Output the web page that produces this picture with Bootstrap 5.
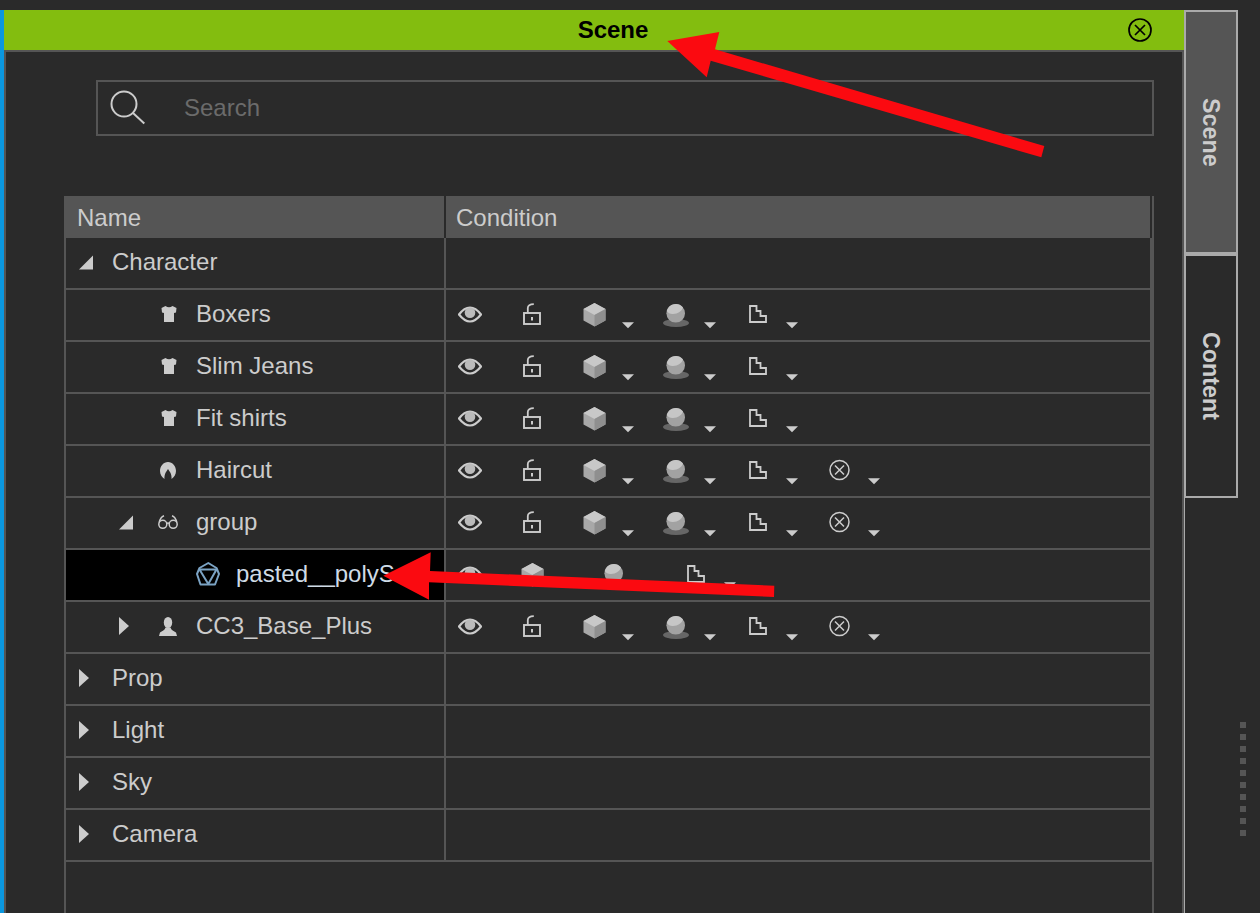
<!DOCTYPE html>
<html lang="en">
<head>
<meta charset="utf-8">
<title>Scene</title>
<link rel="stylesheet" href="https://cdn.jsdelivr.net/npm/bootstrap@5.3.0/dist/css/bootstrap.min.css">
<style>
body{background:#2a2a2a;font-family:"Liberation Sans",Arial,sans-serif;font-size:24px;color:#ccc}
.stage{padding-top:10px}
.strip{width:4px;background:#0b97df;flex:none}
.panel{width:1180px;flex:none}
.ptitle{display:grid;height:40px;background:#83bd0f;color:#000;flex:none}
.ptitle>*{grid-area:1/1}
.ptitle-text{font-weight:700;line-height:40px;text-align:center;padding-left:38px}
.pclose{width:24px;height:24px;justify-self:end;align-self:center;margin-right:32px}
.pbody{border:2px solid #555;border-bottom:0;padding:28px 28px 0 58px;min-height:0}
.finder{height:56px;margin-left:32px;border:2px solid #555;padding-left:12px;flex:none}
.finder svg{width:36px;height:52px;flex:none}
.finder .form-control{background:transparent;border:0;border-radius:0;box-shadow:none;color:#ccc;font-size:24px;padding:0;margin-left:38px;height:52px}
.finder .form-control::placeholder{color:#6b6b6b;opacity:1}
.tree{margin-top:60px;border-left:2px solid #555;border-right:2px solid #555}
.thead{height:42px;margin-left:-2px;background:#555;line-height:43px;flex:none}
.thead-n{width:382px;padding-left:13px;border-right:2px solid #2a2a2a}
.thead-c{padding-left:10px;flex:1;border-right:2px solid #2a2a2a}
.trow{height:52px;border-bottom:2px solid #555;border-right:2px solid #555;flex:none}
.cname{width:380px;height:50px;border-right:2px solid #555;line-height:48px;white-space:nowrap;flex:none}
.cname svg,.ccond svg{height:50px;flex:none;display:block}
.ccond{flex:1;padding-left:12px}
.picked{background:#000;color:#cfdbe6}
.t-open{width:14px;margin-left:13px}
.t-shut{width:10px;margin-left:13px}
.l-open{margin-left:19px}
.l-shut{margin-left:23px}
.t2{margin-left:53px}
.i-shirt{width:16px;margin-left:95px}
.i-hair{width:16px;margin-left:94px}
.i-glass{width:20px;margin-left:25px}
.i-man{width:18px;margin-left:30px}
.i-poly{width:24px;margin-left:130px}
.l-leaf{margin-left:19px}
.l-hair{margin-left:20px}
.l-glass{margin-left:18px}
.l-poly{margin-left:16px}
.e-eye{width:24px}
.e-lock{width:18px;margin-left:41px}
.e-cube{width:23px;margin-left:42px}
.e-ball{width:26px;margin-left:29px}
.e-step{width:18px;margin-left:33px}
.e-x{width:21px;margin-left:31px}
.e-drop{width:12px}
.d-cube{margin-left:16px}
.d-ball{margin-left:15px}
.d-step{margin-left:19px}
.d-x{margin-left:18px}
.s-cube{width:23px;margin-left:39px}
.s-ball{width:26px;margin-left:57px}
.s-step{width:18px;margin-left:60px}
.tabs{width:54px;flex:none;border-left:1px solid #aaa}
.vtab{width:54px;margin-left:-1px;border:2px solid #aaa;writing-mode:vertical-rl;font-weight:700;font-size:23.3px;flex:none}
.vtab-on{height:244px;background:#555}
.vtab-off{height:244px;border-top:2px solid #aaa;background:#2a2a2a}
.grip{padding:712px 0 0 2px;gap:6px}
.grip span{width:6px;height:6px;background:#555}
.marks{left:0;top:0;width:1260px;height:913px;pointer-events:none}
</style>
</head>
<body class="vh-100 overflow-hidden position-relative">
<svg width="0" height="0" class="position-absolute">
  <defs>
    <symbol id="eye" viewBox="0 0 24 50"><path d="M1 24.500C5 19.200 8 17.500 12 17.500s7 1.700 11 7c-4 5-7 7-11 7s-7-2-11-7z" fill="none" stroke="#ccc" stroke-width="2.200"/><circle cx="12" cy="22.800" r="5.300" fill="#bbb"/></symbol>
    <symbol id="lock" viewBox="0 0 18 50"><rect x="1" y="23" width="16" height="11" fill="none" stroke="#ccc" stroke-width="1.900"/><path d="M4.800 23v-5c0-2.500 2-3.800 6-3.800" fill="none" stroke="#ccc" stroke-width="1.800"/><rect x="8" y="27" width="2" height="3.500" fill="#ccc"/></symbol>
    <symbol id="cube" viewBox="0 0 23 50"><path d="M11.500 13L22.500 19V30.500L11.500 36.500L.5 30.500V19z" fill="#a8a8a8"/><path d="M11.500 13L22.500 19L11.500 25L.5 19z" fill="#c8c8c8"/><path d="M22.500 19L11.500 25V36.500L22.500 30.500z" fill="#8f8f8f"/></symbol>
    <symbol id="ball" viewBox="0 0 26 50"><ellipse cx="13" cy="33" rx="13" ry="4" fill="#666"/><circle cx="12.700" cy="23.300" r="9.300" fill="#a2a2a2"/><path d="M3.800 21A9.300 9.300 0 0 1 20 17.600C19 21 15 24 10 24C7.500 24.200 5 23 3.800 21z" fill="#c6c6c6"/></symbol>
    <symbol id="step" viewBox="0 0 18 50"><path d="M1 16H7.500V21H11.500V26H17V32H1z" fill="none" stroke="#ccc" stroke-width="1.800"/></symbol>
    <symbol id="xo" viewBox="0 0 21 50"><circle cx="10.500" cy="24" r="9.500" fill="none" stroke="#ccc" stroke-width="1.500"/><path d="M6 19.500l9 9M15 19.500l-9 9" stroke="#ccc" stroke-width="1.500"/></symbol>
    <symbol id="drop" viewBox="0 0 12 50"><path d="M0 32.300H12L6 38.300z" fill="#ccc"/></symbol>
    <symbol id="topen" viewBox="0 0 14 50"><path d="M0 31.500L14 17.500V31.500z" fill="#ccc"/></symbol>
    <symbol id="tshut" viewBox="0 0 10 50"><path d="M0 15L10 24L0 33z" fill="#ccc"/></symbol>
    <symbol id="shirt" viewBox="0 0 16 50"><path d="M4.500 16L.5 18L1 22.500L3 23V32H13V23L15 22.500L15.500 18L11.500 16Q8 18.500 4.500 16z" fill="#ccc"/></symbol>
    <symbol id="hair" viewBox="0 0 16 50"><path d="M8 16C3.500 16 0 20 0 25c0 3.500 2 6.500 4.500 8-.3-2 .2-4.500 1.200-6.500.7-1.300 1.700-2.500 2.300-3.500.6 1 1.600 2.200 2.300 3.500 1 2 1.500 4.500 1.200 6.500 2.500-1.500 4.500-4.500 4.500-8 0-5-3.500-9-8-9z" fill="#ccc"/></symbol>
    <symbol id="glass" viewBox="0 0 20 50"><g fill="none" stroke="#ccc" stroke-width="1.500"><circle cx="4.800" cy="26.300" r="4"/><circle cx="15.200" cy="26.300" r="4"/><path d="M8.800 25.500Q10 24.500 11.200 25.500M1.200 24.500Q2.500 19 6 17.800M18.800 24.500Q17.500 19 14 17.800"/></g></symbol>
    <symbol id="man" viewBox="0 0 18 50"><ellipse cx="9" cy="20.500" rx="4.200" ry="5.500" fill="#ccc"/><path d="M0 34L1 30.500C3 29 6 28 6.500 25.500H11.500C12 28 15 29 17 30.500L18 34z" fill="#ccc"/></symbol>
    <symbol id="poly" viewBox="0 0 24 50"><g fill="none" stroke="#7ba3c4" stroke-width="2" stroke-linejoin="round"><path d="M12.300 13L20.500 18L23 24L19 34.500H4.500L1 24L3.500 18z"/><path d="M3.500 19.500H20.500L12.300 34z"/></g></symbol>
  </defs>
</svg>

<div class="stage d-flex h-100">
  <div class="strip"></div>
  <div class="panel d-flex flex-column">
    <div class="ptitle">
      <div class="ptitle-text">Scene</div>
      <svg class="pclose" viewBox="0 0 24 24"><circle cx="12" cy="12" r="11" fill="none" stroke="#000" stroke-width="1.700"/><path d="M7 7l10 10M17 7L7 17" stroke="#000" stroke-width="1.700"/></svg>
    </div>
    <div class="pbody flex-grow-1 d-flex flex-column">
      <div class="finder d-flex align-items-center">
        <svg viewBox="0 0 36 52"><circle cx="14" cy="22" r="12.500" fill="none" stroke="#ccc" stroke-width="2"/><path d="M23 31L34.300 41.500" stroke="#ccc" stroke-width="2"/></svg>
        <input class="form-control" type="text" placeholder="Search">
      </div>
      <div class="tree flex-grow-1">
        <div class="thead d-flex">
          <div class="thead-n">Name</div>
          <div class="thead-c">Condition</div>
        </div>

        <div class="trow d-flex">
          <div class="cname d-flex"><svg class="t-open"><use href="#topen"/></svg><span class="l-open">Character</span></div>
          <div class="ccond d-flex"></div>
        </div>

        <div class="trow d-flex">
          <div class="cname d-flex"><svg class="i-shirt"><use href="#shirt"/></svg><span class="l-leaf">Boxers</span></div>
          <div class="ccond d-flex">
            <svg class="e-eye"><use href="#eye"/></svg><svg class="e-lock"><use href="#lock"/></svg><svg class="e-cube"><use href="#cube"/></svg><svg class="e-drop d-cube"><use href="#drop"/></svg><svg class="e-ball"><use href="#ball"/></svg><svg class="e-drop d-ball"><use href="#drop"/></svg><svg class="e-step"><use href="#step"/></svg><svg class="e-drop d-step"><use href="#drop"/></svg>
          </div>
        </div>

        <div class="trow d-flex">
          <div class="cname d-flex"><svg class="i-shirt"><use href="#shirt"/></svg><span class="l-leaf">Slim Jeans</span></div>
          <div class="ccond d-flex">
            <svg class="e-eye"><use href="#eye"/></svg><svg class="e-lock"><use href="#lock"/></svg><svg class="e-cube"><use href="#cube"/></svg><svg class="e-drop d-cube"><use href="#drop"/></svg><svg class="e-ball"><use href="#ball"/></svg><svg class="e-drop d-ball"><use href="#drop"/></svg><svg class="e-step"><use href="#step"/></svg><svg class="e-drop d-step"><use href="#drop"/></svg>
          </div>
        </div>

        <div class="trow d-flex">
          <div class="cname d-flex"><svg class="i-shirt"><use href="#shirt"/></svg><span class="l-leaf">Fit shirts</span></div>
          <div class="ccond d-flex">
            <svg class="e-eye"><use href="#eye"/></svg><svg class="e-lock"><use href="#lock"/></svg><svg class="e-cube"><use href="#cube"/></svg><svg class="e-drop d-cube"><use href="#drop"/></svg><svg class="e-ball"><use href="#ball"/></svg><svg class="e-drop d-ball"><use href="#drop"/></svg><svg class="e-step"><use href="#step"/></svg><svg class="e-drop d-step"><use href="#drop"/></svg>
          </div>
        </div>

        <div class="trow d-flex">
          <div class="cname d-flex"><svg class="i-hair"><use href="#hair"/></svg><span class="l-hair">Haircut</span></div>
          <div class="ccond d-flex">
            <svg class="e-eye"><use href="#eye"/></svg><svg class="e-lock"><use href="#lock"/></svg><svg class="e-cube"><use href="#cube"/></svg><svg class="e-drop d-cube"><use href="#drop"/></svg><svg class="e-ball"><use href="#ball"/></svg><svg class="e-drop d-ball"><use href="#drop"/></svg><svg class="e-step"><use href="#step"/></svg><svg class="e-drop d-step"><use href="#drop"/></svg><svg class="e-x"><use href="#xo"/></svg><svg class="e-drop d-x"><use href="#drop"/></svg>
          </div>
        </div>

        <div class="trow d-flex">
          <div class="cname d-flex"><svg class="t-open t2"><use href="#topen"/></svg><svg class="i-glass"><use href="#glass"/></svg><span class="l-glass">group</span></div>
          <div class="ccond d-flex">
            <svg class="e-eye"><use href="#eye"/></svg><svg class="e-lock"><use href="#lock"/></svg><svg class="e-cube"><use href="#cube"/></svg><svg class="e-drop d-cube"><use href="#drop"/></svg><svg class="e-ball"><use href="#ball"/></svg><svg class="e-drop d-ball"><use href="#drop"/></svg><svg class="e-step"><use href="#step"/></svg><svg class="e-drop d-step"><use href="#drop"/></svg><svg class="e-x"><use href="#xo"/></svg><svg class="e-drop d-x"><use href="#drop"/></svg>
          </div>
        </div>

        <div class="trow d-flex">
          <div class="cname picked d-flex"><svg class="i-poly"><use href="#poly"/></svg><span class="l-poly">pasted__polyS</span></div>
          <div class="ccond d-flex">
            <svg class="e-eye"><use href="#eye"/></svg><svg class="s-cube"><use href="#cube"/></svg><svg class="s-ball"><use href="#ball"/></svg><svg class="s-step"><use href="#step"/></svg><svg class="e-drop d-step"><use href="#drop"/></svg>
          </div>
        </div>

        <div class="trow d-flex">
          <div class="cname d-flex"><svg class="t-shut t2"><use href="#tshut"/></svg><svg class="i-man"><use href="#man"/></svg><span class="l-leaf">CC3_Base_Plus</span></div>
          <div class="ccond d-flex">
            <svg class="e-eye"><use href="#eye"/></svg><svg class="e-lock"><use href="#lock"/></svg><svg class="e-cube"><use href="#cube"/></svg><svg class="e-drop d-cube"><use href="#drop"/></svg><svg class="e-ball"><use href="#ball"/></svg><svg class="e-drop d-ball"><use href="#drop"/></svg><svg class="e-step"><use href="#step"/></svg><svg class="e-drop d-step"><use href="#drop"/></svg><svg class="e-x"><use href="#xo"/></svg><svg class="e-drop d-x"><use href="#drop"/></svg>
          </div>
        </div>

        <div class="trow d-flex"><div class="cname d-flex"><svg class="t-shut"><use href="#tshut"/></svg><span class="l-shut">Prop</span></div><div class="ccond d-flex"></div></div>
        <div class="trow d-flex"><div class="cname d-flex"><svg class="t-shut"><use href="#tshut"/></svg><span class="l-shut">Light</span></div><div class="ccond d-flex"></div></div>
        <div class="trow d-flex"><div class="cname d-flex"><svg class="t-shut"><use href="#tshut"/></svg><span class="l-shut">Sky</span></div><div class="ccond d-flex"></div></div>
        <div class="trow d-flex"><div class="cname d-flex"><svg class="t-shut"><use href="#tshut"/></svg><span class="l-shut">Camera</span></div><div class="ccond d-flex"></div></div>
      </div>
    </div>
  </div>
  <div class="tabs d-flex flex-column">
    <div class="vtab vtab-on d-flex align-items-center justify-content-center">Scene</div>
    <div class="vtab vtab-off d-flex align-items-center justify-content-center">Content</div>
  </div>
  <div class="grip d-flex flex-column">
    <span></span><span></span><span></span><span></span><span></span><span></span><span></span><span></span><span></span><span></span>
  </div>
</div>

<svg class="marks position-absolute" viewBox="0 0 1260 913">
  <path d="M667.300 41L719.300 32L715 49.300L1044.300 146L1041.300 157.300L710.700 60.700L706.700 77.300z" fill="#fb0a10"/>
  <path d="M383.300 575.700L430.700 552.300L430 571L774.300 585.700L774 597L429 582.300L429 599.700z" fill="#fb0a10"/>
</svg>
</body>
</html>
